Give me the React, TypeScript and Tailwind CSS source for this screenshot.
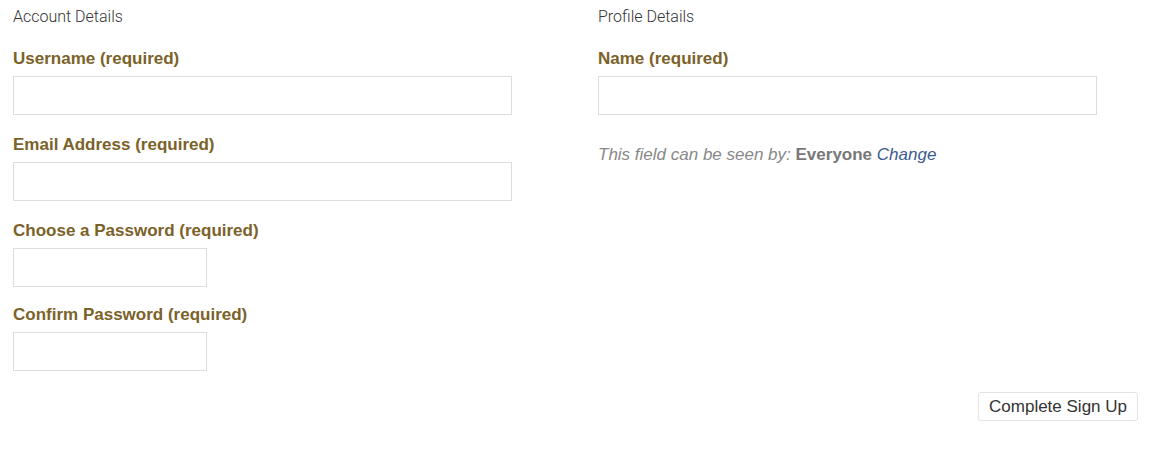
import React from "react";

const labelCls =
  "block text-[17px] leading-[24px] font-bold text-[#7b6228] font-['Liberation_Sans',Arial,sans-serif]";
const headingCls =
  "text-[16px] leading-[24px] font-light text-[#333] font-['Roboto',sans-serif]";
const inputCls =
  "block h-[39px] border border-[#dddddd] bg-white outline-none";

const Field: React.FC<{ label: string; inputWidth: string; top: string }> = ({
  label,
  inputWidth,
  top,
}) => (
  <div className={top}>
    <label className={labelCls}>{label}</label>
    <input type="text" className={`${inputCls} ${inputWidth} mt-[5px]`} />
  </div>
);

export default function App() {
  return (
    <div className="w-[1168px] h-[453px] bg-white">
      <div className="flex pt-[5px]">
        {/* Account Details */}
        <div className="w-[598px] pl-[13px]">
          <h4 className={headingCls}>Account Details</h4>
          <Field label="Username (required)" inputWidth="w-[499px]" top="mt-[18px]" />
          <Field label="Email Address (required)" inputWidth="w-[499px]" top="mt-[18px]" />
          <Field label="Choose a Password (required)" inputWidth="w-[194px]" top="mt-[18px]" />
          <Field label="Confirm Password (required)" inputWidth="w-[194px]" top="mt-[16px]" />
        </div>

        {/* Profile Details */}
        <div className="flex-1">
          <h4 className={headingCls}>Profile Details</h4>
          <Field label="Name (required)" inputWidth="w-[499px]" top="mt-[18px]" />
          <p className="mt-[28px] text-[17px] leading-[24px] italic text-[#888] font-['Liberation_Sans',Arial,sans-serif]">
            This field can be seen by:{" "}
            <span className="not-italic font-bold text-[#777]">Everyone</span>{" "}
            <a href="#" className="text-[#3b5a8f]">
              Change
            </a>
          </p>
        </div>
      </div>

      <div className="flex justify-end pr-[30px] mt-[21px]">
        <button className="h-[29px] px-[10px] rounded-[3px] border border-[#e3e3e3] bg-white text-[17px] text-[#333] font-['Liberation_Sans',Arial,sans-serif]">
          Complete Sign Up
        </button>
      </div>
    </div>
  );
}
